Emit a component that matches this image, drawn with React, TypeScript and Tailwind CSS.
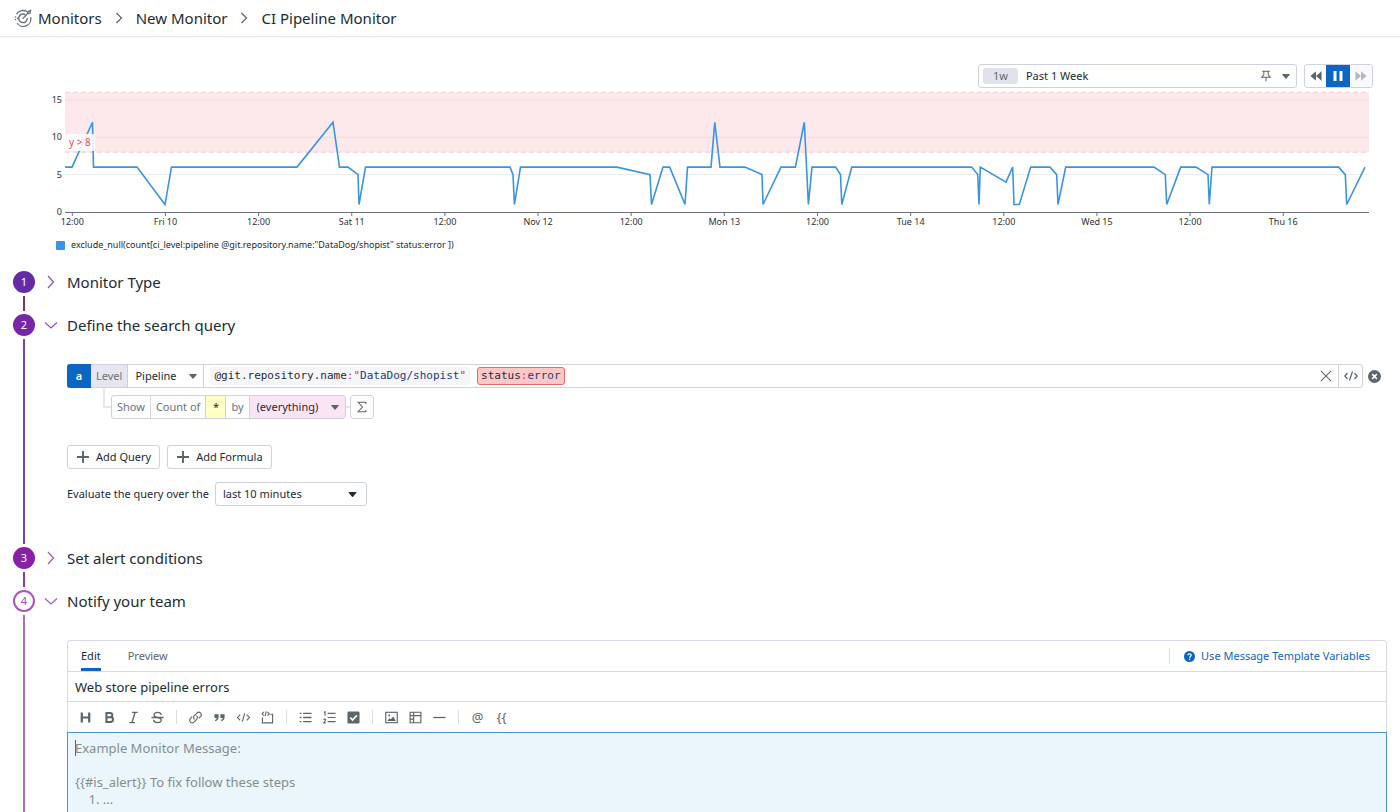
import type { ReactNode } from 'react';
import clsx from 'clsx';

const SERIES: [number, number][] = [
  [65, 6], [72, 6], [92.5, 12], [93.5, 6], [137, 6], [165, 1], [171.5, 6], [297, 6], [333, 12],
  [339.5, 6], [348, 6], [358, 5], [359, 1], [365.5, 6], [510, 6], [513, 5], [514.4, 1], [520.5, 6],
  [617, 6], [650, 5], [651.5, 1], [663, 6], [669.7, 6], [685, 1], [687.5, 6], [711, 6], [714.8, 12],
  [720, 6], [745, 6], [762, 5], [763, 1], [781, 6], [795.4, 6], [804.3, 12], [808.4, 1], [812, 6],
  [835.6, 6], [840.5, 5], [841.8, 1], [851.8, 6], [971.7, 6], [977.7, 5], [979, 1], [980.3, 6],
  [1006, 4], [1012.7, 6], [1014, 1], [1019.3, 1], [1030.7, 6], [1050, 6], [1056.7, 5], [1058, 1],
  [1065.7, 6], [1154, 6], [1165.3, 5], [1166.7, 1], [1180.7, 6], [1196, 6], [1208, 5], [1209.3, 1],
  [1212, 6], [1338.7, 6], [1345.3, 5], [1346.7, 1], [1365, 6],
];

const TIME_LABELS = [
  '12:00', 'Fri 10', '12:00', 'Sat 11', '12:00', 'Nov 12', '12:00',
  'Mon 13', '12:00', 'Tue 14', '12:00', 'Wed 15', '12:00', 'Thu 16',
];

const yScale = (value: number) => 124 - value * 7.48;
const tickX = (index: number) => 72.3 + index * 93.15;

function Chart() {
  return (
    <svg viewBox="0 0 1400 142" className="block w-full shrink-0" role="img" aria-label="Pipeline errors over the past week">
      <rect x="65" y={yScale(16)} width="1304" height={yScale(8) - yScale(16)} fill="#fde9eb" />
      {[16, 8].map((v) => (
        <line key={v} x1="65" x2="1369" y1={yScale(v)} y2={yScale(v)} stroke="#f6c9cf" strokeDasharray="5 3" />
      ))}
      {[5, 10, 15].map((v) => (
        <line key={v} x1="65" x2="1369" y1={yScale(v)} y2={yScale(v)} stroke={v === 5 ? '#ececf0' : '#f1d8dc'} />
      ))}
      <line x1="65" x2="1369" y1="124.5" y2="124.5" stroke="#6c6f80" />
      {[0, 5, 10, 15].map((v) => (
        <text key={v} x="62" y={yScale(v) + 3} textAnchor="end" fontSize="9" fill="#2b3338">
          {v}
        </text>
      ))}
      {TIME_LABELS.map((label, i) => (
        <g key={i}>
          <line x1={tickX(i)} x2={tickX(i)} y1="124" y2="128" stroke="#6c6f80" />
          <text x={tickX(i)} y="137" textAnchor="middle" fontSize="9" fill="#2b3338">
            {label}
          </text>
        </g>
      ))}
      <polyline
        points={SERIES.map(([x, v]) => `${x},${yScale(v)}`).join(' ')}
        fill="none"
        stroke="#3a94e4"
        strokeWidth="1.6"
      />
      <rect x="65" y="46" width="30" height="17" rx="2" fill="#fff" fillOpacity="0.85" />
      <text x="69" y="58" fontSize="10" fill="#eb4562">
        y &gt; 8
      </text>
    </svg>
  );
}

interface IconProps {
  children: ReactNode;
  className?: string;
  strokeWidth?: number;
}

function Icon({ children, className = 'size-3.5', strokeWidth = 1.2 }: IconProps) {
  return (
    <svg
      viewBox="0 0 14 14"
      className={clsx('shrink-0', className)}
      fill="none"
      stroke="currentColor"
      strokeWidth={strokeWidth}
      aria-hidden="true"
    >
      {children}
    </svg>
  );
}

function Caret({ className }: { className?: string }) {
  return (
    <svg viewBox="0 0 10 6" className={clsx('h-[5px] w-2 shrink-0', className)} fill="currentColor" aria-hidden="true">
      <path d="M.8 0h8.4q.8.2.4.9L5.6 5.6q-.6.6-1.2 0L.4.9Q0 .2.8 0Z" />
    </svg>
  );
}

function MonitorLogo() {
  return (
    <svg viewBox="0 0 18 18" className="size-[18px] shrink-0 text-[#6b7277]" fill="none" stroke="currentColor" aria-hidden="true">
      <path d="M13.2 2.800A7.500 7.500 0 0 0 2.500 5.300M16.600 8.200A7.500 7.500 0 0 1 3 14" strokeWidth="1.300" />
      <path d="M1.500 7.200v1.300M1.500 10v1.300M3.600 8.600v1.500" strokeWidth="1.300" />
      <path d="M11.300 5.700A4.300 4.300 0 1 0 13.300 9.300" strokeWidth="1.400" />
      <path d="m8.600 9.800 5.200-5.500M13.500 4.600l.4-1.800L16.500 1.500l-.5 2.600Z" strokeWidth="1.300" />
    </svg>
  );
}

function Header() {
  return (
    <header className="flex h-[37px] shrink-0 items-center border-b border-[#e9e9ee] px-3.5 shadow-[0_1px_2px_rgba(0,0,0,0.04)]">
      <nav aria-label="Breadcrumb" className="flex items-center text-[15px] leading-5">
        <MonitorLogo />
        <a href="#monitors" className="ml-1.5">Monitors</a>
        <Icon className="mx-2.5 size-3.5 text-[#5b656c]"><path d="m4.5 2 5 5-5 5" /></Icon>
        <a href="#new">New Monitor</a>
        <Icon className="mx-2.5 size-3.5 text-[#5b656c]"><path d="m4.5 2 5 5-5 5" /></Icon>
        <span aria-current="page">CI Pipeline Monitor</span>
      </nav>
    </header>
  );
}

function TimeControls() {
  return (
    <div className="flex justify-end gap-[7px] pr-[27px] pt-[27px]">
      <button type="button" className="flex h-6 w-[319px] items-center rounded-[3px] border border-[#d0d0e2] px-1 text-[11px]">
        <span className="rounded-[3px] bg-[#e2e2ec] px-2.5 leading-4 text-[#5b656c]">1w</span>
        <span className="ml-2">Past 1 Week</span>
        <Icon className="ml-auto size-3 text-[#5b656c]">
          <path d="M2.500 1.500h9M4.500 1.500v4L2 8.500h10l-2.500-3v-4M7 8.500V13" />
        </Icon>
        <Caret className="ml-2.5 mr-0.5 text-[#5b656c]" />
      </button>
      <div className="flex h-6 overflow-hidden rounded-[3px] border border-[#d0d0e2] text-[#5b656c]">
        <button type="button" aria-label="Back" className="flex w-[21px] items-center justify-center">
          <Icon className="size-3"><path d="M7 1.500v11L.5 7ZM13.500 1.500v11L7 7Z" fill="currentColor" stroke="none" /></Icon>
        </button>
        <button type="button" aria-label="Pause" className="flex w-6 items-center justify-center bg-[#0b66c3] text-white">
          <Icon><path d="M2.500 2h3v10h-3ZM8.500 2h3v10h-3Z" fill="currentColor" stroke="none" /></Icon>
        </button>
        <button type="button" aria-label="Forward" className="flex w-[22px] items-center justify-center bg-[#fafafc] text-[#b5b8be]">
          <Icon className="size-3"><path d="M.5 1.500v11L7 7ZM7 1.500v11L13.500 7Z" fill="currentColor" stroke="none" /></Icon>
        </button>
      </div>
    </div>
  );
}

interface StepProps {
  number: number;
  title: string;
  open?: boolean;
  circle: string;
  line: string;
  chevron: string;
  className?: string;
  children?: ReactNode;
}

function Step({ number, title, open, circle, line, chevron, className, children }: StepProps) {
  return (
    <section className={clsx('flex px-[13px]', className)}>
      <div className="flex w-[22px] shrink-0 flex-col items-center">
        <span className={clsx('flex size-[22px] shrink-0 items-center justify-center rounded-full text-[11px]', circle)}>
          {number}
        </span>
        <span className={clsx('my-[3px] w-0.5 grow', line)} />
      </div>
      <div className="min-w-0 grow">
        <h2 className="text-[15px] leading-[22px]">
          <button type="button" aria-expanded={!!open} className="flex items-center">
            <span className="flex w-8 justify-center">
              <Icon className={clsx('size-3.5', chevron)}>
                <path d={open ? 'm1 4.500 6 5.500 6-5.500' : 'm4 1 5.500 6L4 13'} />
              </Icon>
            </span>
            {title}
          </button>
        </h2>
        {children && <div className="pl-8">{children}</div>}
      </div>
    </section>
  );
}

function QueryEditor() {
  return (
    <>
      <div className="mt-7 flex items-center text-[11px]">
        <div className="flex h-6 grow items-stretch rounded-[3px] border border-[#d0d0e2]">
          <span className="-my-px -ml-px flex w-6 items-center justify-center rounded-l-[3px] bg-[#0b66c3] font-semibold text-white">a</span>
          <label htmlFor="level" className="flex items-center border-r border-[#d0d0e2] bg-[#e5e6f0] px-[5px] text-[#6b7378]">Level</label>
          <span className="relative flex w-[76px] items-center border-r border-[#d0d0e2]">
            <select id="level" className="h-full w-full appearance-none bg-transparent pl-[7px] outline-none">
              <option>Pipeline</option>
              <option>Job</option>
            </select>
            <Caret className="pointer-events-none absolute right-1.5 text-[#5b656c]" />
          </span>
          <span className="ml-1.5 flex grow items-center font-['DejaVu_Sans_Mono',monospace]">
            <span className="rounded-[2px] bg-[#f6f6f8] px-1 leading-[18px]">
              @git.repository.name<span className="text-[#d6248a]">:</span>
              <span className="text-[#d6248a]">"</span>
              <span className="text-[#1b3a7c]">DataDog/shopist</span>
              <span className="text-[#d6248a]">"</span>
            </span>
            <span className="ml-[7px] rounded-[3px] border border-[#e06c6c] bg-[#fcc8c6] px-[3px] leading-4">
              status<span className="text-[#d6248a]">:</span>
              <span className="text-[#1b3a7c]">error</span>
            </span>
            <input aria-label="Search query" className="ml-1 min-w-0 grow outline-none" />
          </span>
          <button type="button" aria-label="Clear" className="flex w-6 items-center justify-center text-[#5b656c]">
            <Icon className="size-3"><path d="m1 1 12 12M13 1 1 13" /></Icon>
          </button>
          <button type="button" aria-label="Edit as code" className="flex w-6 items-center justify-center border-l border-[#d0d0e2] text-[#5b656c]">
            <Icon><path d="M3.500 4 .8 7l2.700 3M10.500 4l2.700 3-2.700 3M8.500 2.500l-3 9" /></Icon>
          </button>
        </div>
        <button type="button" aria-label="Remove query" className="ml-[5px] mr-1.5 text-[#5b656c]">
          <Icon className="size-[13px]">
            <circle cx="7" cy="7" r="7" fill="currentColor" stroke="none" />
            <path d="m4.500 4.500 5 5M9.500 4.500l-5 5" stroke="#fff" strokeWidth="1.8" />
          </Icon>
        </button>
      </div>
      <div className="flex pl-9 text-[11px] text-[#6b7378]">
        <span className="h-5 w-2 border-b-2 border-l-2 border-[#e5e6f0]" />
        <div className="mt-[7px] flex h-6 items-stretch divide-x divide-[#d0d0e2] overflow-hidden rounded-[3px] border border-[#d0d0e2]">
          <span className="flex items-center px-[5px]">Show</span>
          <span className="flex items-center px-[5px]">Count of</span>
          <span className="flex w-5 items-center justify-center bg-[#ffffc4] text-[#1c2b34]">*</span>
          <label htmlFor="group" className="flex items-center px-[5px]">by</label>
          <span className="relative flex w-[95px] items-center bg-[#fde4f4] text-[#1c2b34]">
            <select id="group" className="h-full w-full appearance-none bg-transparent pl-[7px] outline-none">
              <option>(everything)</option>
            </select>
            <Caret className="pointer-events-none absolute right-1.5 text-[#5b656c]" />
          </span>
        </div>
        <span className="mt-[18px] h-0.5 w-1 bg-[#e5e6f0]" />
        <button type="button" aria-label="Add function" className="mt-[7px] flex size-6 items-center justify-center rounded-[3px] border border-[#d0d0e2] text-[#5b656c]">
          <Icon className="size-3"><path d="M11.500 3.500V1.500H2.500L7.500 7l-5 5.500h9v-2" /></Icon>
        </button>
      </div>
      <div className="mt-[26px] flex gap-[7px] text-[11px]">
        {['Add Query', 'Add Formula'].map((label) => (
          <button key={label} type="button" className="flex h-6 items-center gap-1.5 rounded-[3px] border border-[#d0d0e2] px-2">
            <Icon className="size-3.5 text-[#5b656c]" strokeWidth={1.9}><path d="M7 1v12M1 7h12" /></Icon>
            {label}
          </button>
        ))}
      </div>
      <div className="mt-[13px] flex items-center text-[11px]">
        <label htmlFor="window">Evaluate the query over the</label>
        <span className="relative ml-1.5 flex h-6 w-[152px] items-center rounded-[3px] border border-[#d0d0e2]">
          <select id="window" className="h-full w-full appearance-none bg-transparent pl-[7px] outline-none">
            <option>last 10 minutes</option>
            <option>last 1 hour</option>
          </select>
          <Caret className="pointer-events-none absolute right-[9px] w-[9px]" />
        </span>
      </div>
    </>
  );
}

const TOOL_GROUPS: { label: string; icon: ReactNode }[][] = [
  [
    { label: 'Heading', icon: <path d="M3 1.500v11M11 1.500v11M3 7h8" strokeWidth="2.400" /> },
    { label: 'Bold', icon: <path d="M3.700 2.200h4a2.300 2.300 0 0 1 0 4.600h-4ZM3.700 6.800h4.600a2.500 2.500 0 0 1 0 5H3.700Z" strokeWidth="2.200" /> },
    { label: 'Italic', icon: <path d="M5.500 1.500h6M2.500 12.500h6M8.700 1.500l-3.400 11" strokeWidth="1.500" /> },
    { label: 'Strikethrough', icon: <path d="M11 4.200C10.600 2.400 9 1.500 7 1.500S3.300 2.500 3.300 4.300C3.300 6 5 6.600 7 7s4 1 4 2.800-1.700 2.700-4 2.700-3.900-1-4.200-2.900M.5 7h13" strokeWidth="1.400" /> },
  ],
  [
    { label: 'Link', icon: <path d="M6 9a2.700 2.700 0 0 1-.3-3.900l3-3.100a2.700 2.700 0 0 1 3.900 3.700l-2 2.200M8 5a2.700 2.700 0 0 1 .3 3.900l-3 3.100a2.700 2.700 0 0 1-3.900-3.700l2-2.200" /> },
    { label: 'Quote', icon: <path d="M1.500 3.500H6v3.200C6 9 4.500 10.500 2.300 11V9.300C3.500 9 4 8.400 4 7.500H1.500ZM8 3.500h4.500v3.200c0 2.300-1.500 3.800-3.700 4.300V9.300c1.200-.3 1.700-.9 1.700-1.800H8Z" fill="currentColor" stroke="none" /> },
    { label: 'Code', icon: <path d="M3.500 3.800.6 7l2.900 3.200M10.500 3.800 13.400 7l-2.900 3.200M8.300 2.500l-2.600 9" /> },
    { label: 'Code block', icon: <path d="M1.500 7v5.800h11V3.500H10M3 1 1.200 3 3 5M7 1l1.800 2L7 5M5.600.5 4.400 5.500" /> },
  ],
  [
    { label: 'Bulleted list', icon: <path d="M4.500 2.500h9M4.500 7h9M4.500 11.500h9M.8 2.500h1.800M.8 7h1.800M.8 11.500h1.800" strokeWidth="1.400" /> },
    { label: 'Numbered list', icon: <path d="M5 2.500h8.500M5 7h8.500M5 11.500h8.500M1 1.600l1.200-.8v4.400M.8 9.500c.3-1.200 2.300-1 2.100.2C2.800 10.500 1 11.600.9 12.800H3" /> },
    { label: 'Checklist', icon: (
      <>
        <rect x=".5" y=".5" width="13" height="13" rx="1.500" fill="currentColor" stroke="none" />
        <path d="m3.500 7 2.500 2.700 4.600-5" stroke="#fff" strokeWidth="1.800" />
      </>
    ) },
  ],
  [
    { label: 'Image', icon: (
      <>
        <rect x=".8" y="1.400" width="12.400" height="11.200" />
        <path d="m2.500 10.800 2.300-3 1.500 1.200L9 6l2.600 4.800Z" fill="currentColor" stroke="none" />
        <circle cx="4.500" cy="4.800" r="1" fill="currentColor" stroke="none" />
      </>
    ) },
    { label: 'Table', icon: <path d="M1.200 1.400h11.600v11.200H1.200ZM1.200 5h11.600M5 1.400v11.200M1.200 8.800H5" /> },
    { label: 'Divider', icon: <path d="M.5 7h13" strokeWidth="1.400" /> },
  ],
];

const MESSAGE_PLACEHOLDER = 'Example Monitor Message:\n\n{{#is_alert}} To fix follow these steps\n    1. ...';

function MessageEditor() {
  return (
    <div className="mt-7 flex grow flex-col rounded-t-[3px] border border-[#d9d8e6]">
      <div className="flex h-[31px] items-center border-b border-[#d9d8e6] px-[13px] text-[11px]">
        <div role="tablist" className="flex h-full gap-[27px]">
          <button type="button" role="tab" aria-selected="true" className="h-[30px] border-b-[3px] border-[#0b66c3] pt-[3px]">Edit</button>
          <button type="button" role="tab" aria-selected="false" className="h-[30px] border-b-[3px] border-transparent pt-[3px] text-[#5b656c]">Preview</button>
        </div>
        <a href="#variables" className="ml-auto flex items-center gap-1.5 border-l border-[#dcdce4] pl-3.5 pr-[3px] text-[#0b66c3]">
          <Icon className="size-[11px]">
            <circle cx="7" cy="7" r="7" fill="currentColor" stroke="none" />
            <path d="M4.800 5.500c.2-2.600 4.400-2.500 4.400 0C9.200 7 7.200 7 7.100 8.700M7.100 9.800v1.700" stroke="#fff" strokeWidth="1.600" />
          </Icon>
          Use Message Template Variables
        </a>
      </div>
      <input aria-label="Monitor name" defaultValue="Web store pipeline errors" className="h-[30px] border-b border-[#d9d8e6] px-[7px] text-[13px] outline-none" />
      <div role="toolbar" aria-label="Formatting" className="flex h-[30px] items-center px-[11px] text-[#5b656c]">
        {TOOL_GROUPS.map((group, i) => (
          <div key={i} className="flex items-center gap-[11px] pr-3">
            {group.map(({ label, icon }) => (
              <button key={label} type="button" aria-label={label}><Icon className="size-[13px]">{icon}</Icon></button>
            ))}
            <span className="ml-px h-3.5 w-px bg-[#dcdce4]" />
          </div>
        ))}
        <div className="flex items-center gap-[11px] text-[13px] leading-4">
          <button type="button" aria-label="Mention" className="w-[13px]">@</button>
          <button type="button" aria-label="Template variable" className="w-[13px]">{'{{'}</button>
        </div>
      </div>
      <div className="relative -mx-px flex grow">
        <textarea
          aria-label="Message"
          rows={6}
          placeholder={MESSAGE_PLACEHOLDER}
          className="block w-full resize-none border border-[#4a95c6] bg-[#eaf5fc] px-[7px] py-[7px] text-[13px] leading-[17px] outline-none placeholder:text-[#858d92]"
        />
        <span className="absolute left-2 top-2 h-4 w-px bg-[#5b656c]" />
      </div>
    </div>
  );
}

export default function App() {
  return (
    <div className="flex h-screen flex-col overflow-hidden bg-white font-['Noto_Sans',sans-serif] text-[#1c2b34]">
      <Header />
      <TimeControls />
      <Chart />
      <div className="mb-[18px] flex items-center gap-1.5 pl-14 pt-[7px] text-[9px] leading-4">
        <span className="size-[9px] rounded-[1px] bg-[#3a94e4]" />
        exclude_null(count[ci_level:pipeline @git.repository.name:"DataDog/shopist" status:error ])
      </div>
      <Step number={1} title="Monitor Type" className="h-[43px] shrink-0" circle="bg-[#632ca6] text-white" line="bg-[#6c2ba4]" chevron="text-[#8a50c0]" />
      <Step number={2} open title="Define the search query" className="h-[233px] shrink-0" circle="bg-[#7626a6] text-white" line="bg-[#7f3fa8]" chevron="text-[#9750bb]">
        <QueryEditor />
      </Step>
      <Step number={3} title="Set alert conditions" className="h-[43px] shrink-0" circle="bg-[#8821a5] text-white" line="bg-[#9238ad]" chevron="text-[#a951bd]" />
      <Step number={4} open title="Notify your team" className="shrink-0" circle="border-2 border-[#ae54bd] text-[#a14bb5]" line="bg-[#b468c0]" chevron="text-[#ae54bd]">
        <MessageEditor />
      </Step>
    </div>
  );
}
